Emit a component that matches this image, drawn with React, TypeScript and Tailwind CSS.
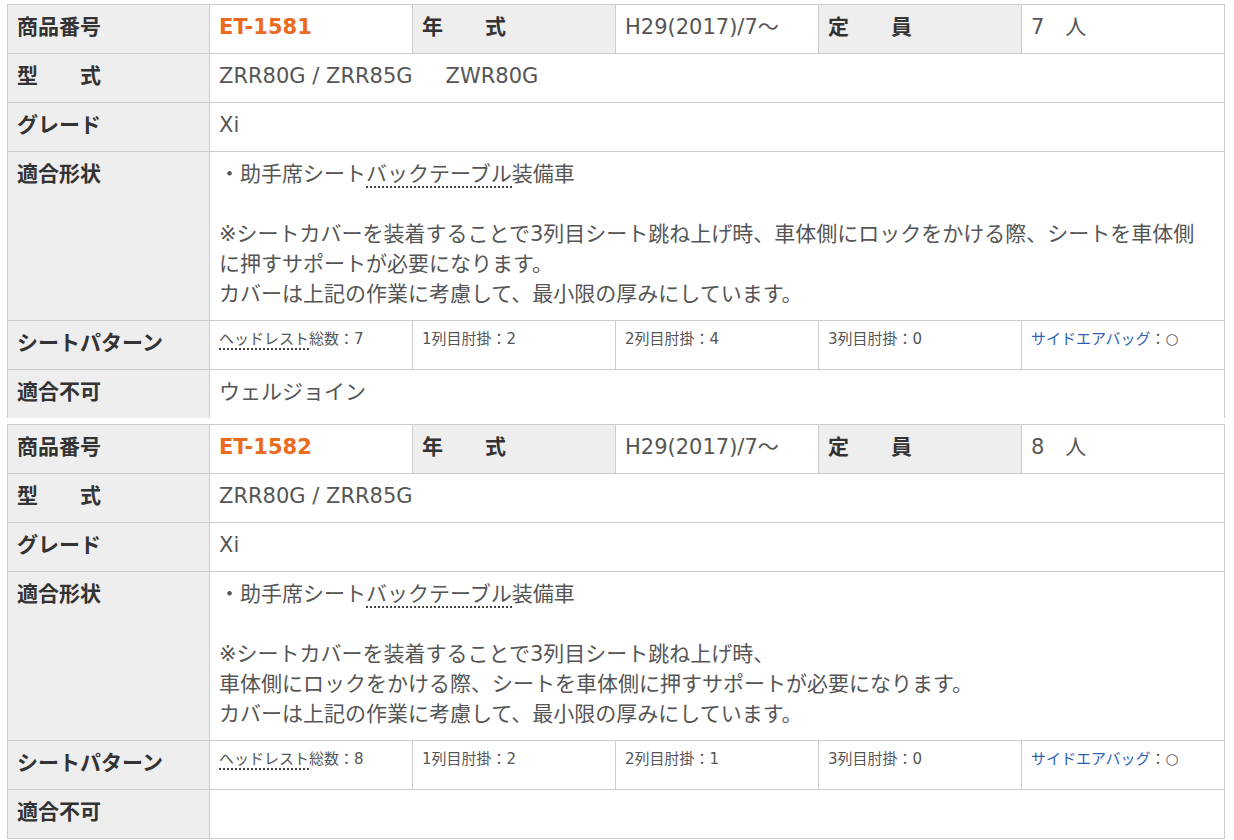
import React from 'react';

type Spec = {
    code: string;
    year: string;
    seats: string;
    models: string[];
    grade: string;
    noteLines: string[];
    headrest: number;
    row1: number;
    row2: number;
    row3: number;
    ng: string;
    cut?: boolean;
};

const specs: Spec[] = [
    {
        code: 'ET-1581',
        year: 'H29(2017)/7～',
        seats: '7　人',
        models: ['ZRR80G / ZRR85G', 'ZWR80G'],
        grade: 'Xi',
        noteLines: [
            '※シートカバーを装着することで3列目シート跳ね上げ時、車体側にロックをかける際、シートを車体側',
            'に押すサポートが必要になります。',
            'カバーは上記の作業に考慮して、最小限の厚みにしています。',
        ],
        headrest: 7,
        row1: 2,
        row2: 4,
        row3: 0,
        ng: 'ウェルジョイン',
        cut: true,
    },
    {
        code: 'ET-1582',
        year: 'H29(2017)/7～',
        seats: '8　人',
        models: ['ZRR80G / ZRR85G'],
        grade: 'Xi',
        noteLines: [
            '※シートカバーを装着することで3列目シート跳ね上げ時、',
            '車体側にロックをかける際、シートを車体側に押すサポートが必要になります。',
            'カバーは上記の作業に考慮して、最小限の厚みにしています。',
        ],
        headrest: 8,
        row1: 2,
        row2: 1,
        row3: 0,
        ng: '',
    },
];

const line = 'border-r border-[#cccccc]';
const label = 'bg-[#eeeeee] px-[9px] pt-[7px] pb-[11px] font-bold text-[#333]';
const value = 'px-[9px] pt-[7px] pb-[11px] text-[#555]';
const small = 'px-[9px] pt-[7px] text-[15px] leading-[22px] border-r border-b border-[#cccccc]';

const SpecTable: React.FC<{ spec: Spec }> = ({ spec }) => {
    // last row of the first block is cut off in the original page
    const rowLine = `${line} border-b`;
    const lastLine = spec.cut ? line : rowLine;

    return (
        <div className="grid grid-cols-[202px_203px_203px_203px_203px_203px] w-[1218px] border-t border-l border-[#cccccc] text-[21px] leading-[30px]">
            <div className={`${label} ${rowLine}`}>商品番号</div>
            <div className={`px-[9px] pt-[7px] pb-[11px] font-bold text-[#ea6a1e] ${rowLine}`}>{spec.code}</div>
            <div className={`${label} ${rowLine}`}>年　　式</div>
            <div className={`${value} ${rowLine}`}>{spec.year}</div>
            <div className={`${label} ${rowLine}`}>定　　員</div>
            <div className={`${value} ${rowLine}`}>{spec.seats}</div>

            <div className={`${label} ${rowLine}`}>型　　式</div>
            <div className={`${value} ${rowLine} col-span-5`}>
                {spec.models[0]}
                {spec.models[1] && <span className="ml-[33px]">{spec.models[1]}</span>}
            </div>

            <div className={`${label} ${rowLine}`}>グレード</div>
            <div className={`${value} ${rowLine} col-span-5`}>{spec.grade}</div>

            <div className={`${label} ${rowLine}`}>適合形状</div>
            <div className={`${value} ${rowLine} col-span-5`}>
                <div>
                    ・助手席シート<span className="border-b-2 border-dotted border-[#444]">バックテーブル</span>装備車
                </div>
                <div>&nbsp;</div>
                {spec.noteLines.map((l, i) => (
                    <div key={i} className="whitespace-nowrap">{l}</div>
                ))}
            </div>

            <div className={`${label} ${rowLine}`}>シートパターン</div>
            <div className={`${small} text-[#555]`}>
                <span className="border-b-2 border-dotted border-[#444]">ヘッドレスト</span>総数：{spec.headrest}
            </div>
            <div className={`${small} text-[#555]`}>1列目肘掛：{spec.row1}</div>
            <div className={`${small} text-[#555]`}>2列目肘掛：{spec.row2}</div>
            <div className={`${small} text-[#555]`}>3列目肘掛：{spec.row3}</div>
            <div className={`${small} text-[#2f5fb3]`}>
                サイドエアバッグ<span className="text-[#555]">：○</span>
            </div>

            <div className={`${label} ${lastLine}`}>適合不可</div>
            <div className={`${value} ${lastLine} col-span-5`}>{spec.ng}</div>
        </div>
    );
};

const App: React.FC = () => {
    return (
        <div className="min-h-screen bg-white pt-[4px] pl-[7px] font-['DejaVu_Sans','Noto_Sans_CJK_JP',sans-serif]">
            <div className="flex flex-col gap-[6px]">
                {specs.map((s) => (
                    <SpecTable key={s.code} spec={s} />
                ))}
            </div>
        </div>
    );
};

export default App;
